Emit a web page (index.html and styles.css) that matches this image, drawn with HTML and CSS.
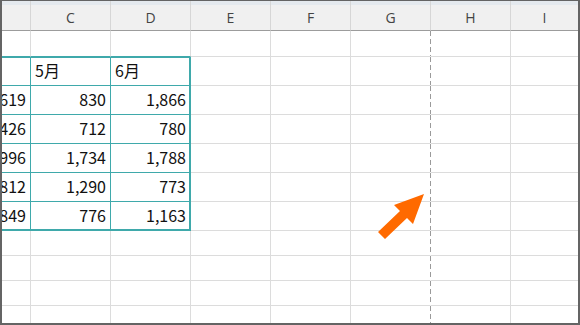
FILE: index.html
```html
<!DOCTYPE html>
<html lang="ja">
<head>
<meta charset="utf-8">
<title>Sheet</title>
<link rel="stylesheet" href="styles.css">
</head>
<body>
<div class="sheet">
  <div class="grid">
    <!-- header -->
    <div class="hd"></div><div class="hd">C</div><div class="hd">D</div><div class="hd">E</div><div class="hd">F</div><div class="hd">G</div><div class="hd">H</div><div class="hd last">I</div>
    <!-- row 1 -->
    <div class="c tb"></div><div class="c tb"></div><div class="c tb"></div><div class="c"></div><div class="c"></div><div class="c pb"></div><div class="c"></div><div class="c last"></div>
    <!-- table header -->
    <div class="c t top"></div><div class="c t top">5月</div><div class="c t top rt">6月</div><div class="c"></div><div class="c"></div><div class="c pb"></div><div class="c"></div><div class="c last"></div>
    <!-- data -->
    <div class="c t num">619</div><div class="c t num">830</div><div class="c t num rt">1,866</div><div class="c"></div><div class="c"></div><div class="c pb"></div><div class="c"></div><div class="c last"></div>
    <div class="c t num">426</div><div class="c t num">712</div><div class="c t num rt">780</div><div class="c"></div><div class="c"></div><div class="c pb"></div><div class="c"></div><div class="c last"></div>
    <div class="c t num">996</div><div class="c t num">1,734</div><div class="c t num rt">1,788</div><div class="c"></div><div class="c"></div><div class="c pb"></div><div class="c"></div><div class="c last"></div>
    <div class="c t num">812</div><div class="c t num">1,290</div><div class="c t num rt">773</div><div class="c"></div><div class="c"></div><div class="c pb"></div><div class="c"></div><div class="c last"></div>
    <div class="c t num bt">849</div><div class="c t num bt">776</div><div class="c t num bt rt">1,163</div><div class="c"></div><div class="c"></div><div class="c pb"></div><div class="c"></div><div class="c last"></div>
    <!-- empty rows -->
    <div class="c"></div><div class="c"></div><div class="c"></div><div class="c"></div><div class="c"></div><div class="c pb"></div><div class="c"></div><div class="c last"></div>
    <div class="c"></div><div class="c"></div><div class="c"></div><div class="c"></div><div class="c"></div><div class="c pb"></div><div class="c"></div><div class="c last"></div>
    <div class="c"></div><div class="c"></div><div class="c"></div><div class="c"></div><div class="c"></div><div class="c pb"></div><div class="c"></div><div class="c last"></div>
    <div class="c nb"></div><div class="c nb"></div><div class="c nb"></div><div class="c nb"></div><div class="c nb"></div><div class="c nb pb"></div><div class="c nb"></div><div class="c nb last"></div>
  </div>
  <svg class="arrow" viewBox="2 1 576 322" width="576" height="322" aria-hidden="true">
    <polygon points="424,194 413,224 407,218 385,239 378,232 400,211 394,205" fill="#ff6a00"/>
  </svg>
</div>
</body>
</html>
```

FILE: styles.css
```css
html, body {
  margin: 0;
  padding: 0;
  background: #ffffff;
}

.sheet {
  position: relative;
  width: 580px;
  height: 325px;
  box-sizing: border-box;
  border-style: solid;
  border-color: #646464;
  border-width: 1px 2px 2px 2px;
  overflow: hidden;
  font-family: "Noto Sans CJK JP", "Noto Sans", sans-serif;
}

.grid {
  display: grid;
  grid-template-columns: 29px repeat(6, 80px) 67px;
  grid-template-rows: 30px 26px repeat(6, 29px) repeat(3, 25px) 17px;
  height: 322px;
}

.hd {
  box-sizing: border-box;
  background: linear-gradient(to bottom, #e4e9ee 0, #e4e9ee 4px, #f0f0f0 4px);
  border-right: 1px solid #d6d6d6;
  border-bottom: 1px solid #9c9c9c;
  color: #444444;
  font-family: "Open Sans", "Noto Sans", sans-serif;
  font-size: 14px;
  display: flex;
  align-items: center;
  justify-content: center;
  padding-top: 3px;
}

.c {
  box-sizing: border-box;
  border-right: 1px solid #dcdcdc;
  border-bottom: 1px solid #dcdcdc;
  font-size: 16px;
  line-height: 20px;
  color: #111111;
  display: flex;
  align-items: center;
  padding: 0 4px 3px 4px;
  overflow: hidden;
  white-space: nowrap;
}

.c.last, .hd.last {
  border-right: none;
}

.c.nb {
  border-bottom: none;
}

.c.pb {
  border-right-color: transparent;
  background-image: linear-gradient(to bottom, #9a9a9a 0, #9a9a9a 5px, transparent 5px);
  background-origin: border-box;
  background-position: right top;
  background-size: 1px 8px;
  background-repeat: repeat-y;
}

.c.tb {
  border-bottom-color: #3fa9ab;
}

.c.t {
  border-right-color: #3fa9ab;
  border-bottom-color: #3fa9ab;
}

.num {
  justify-content: flex-end;
}

.t.top { box-shadow: inset 0 1px 0 #3fa9ab; }
.t.rt { box-shadow: inset -1px 0 0 #3fa9ab; }
.t.bt { box-shadow: inset 0 -1px 0 #3fa9ab; }
.t.top.rt { box-shadow: inset 0 1px 0 #3fa9ab, inset -1px 0 0 #3fa9ab; }
.t.bt.rt { box-shadow: inset 0 -1px 0 #3fa9ab, inset -1px 0 0 #3fa9ab; }

.arrow {
  position: absolute;
  left: 0;
  top: 0;
  pointer-events: none;
}
```
